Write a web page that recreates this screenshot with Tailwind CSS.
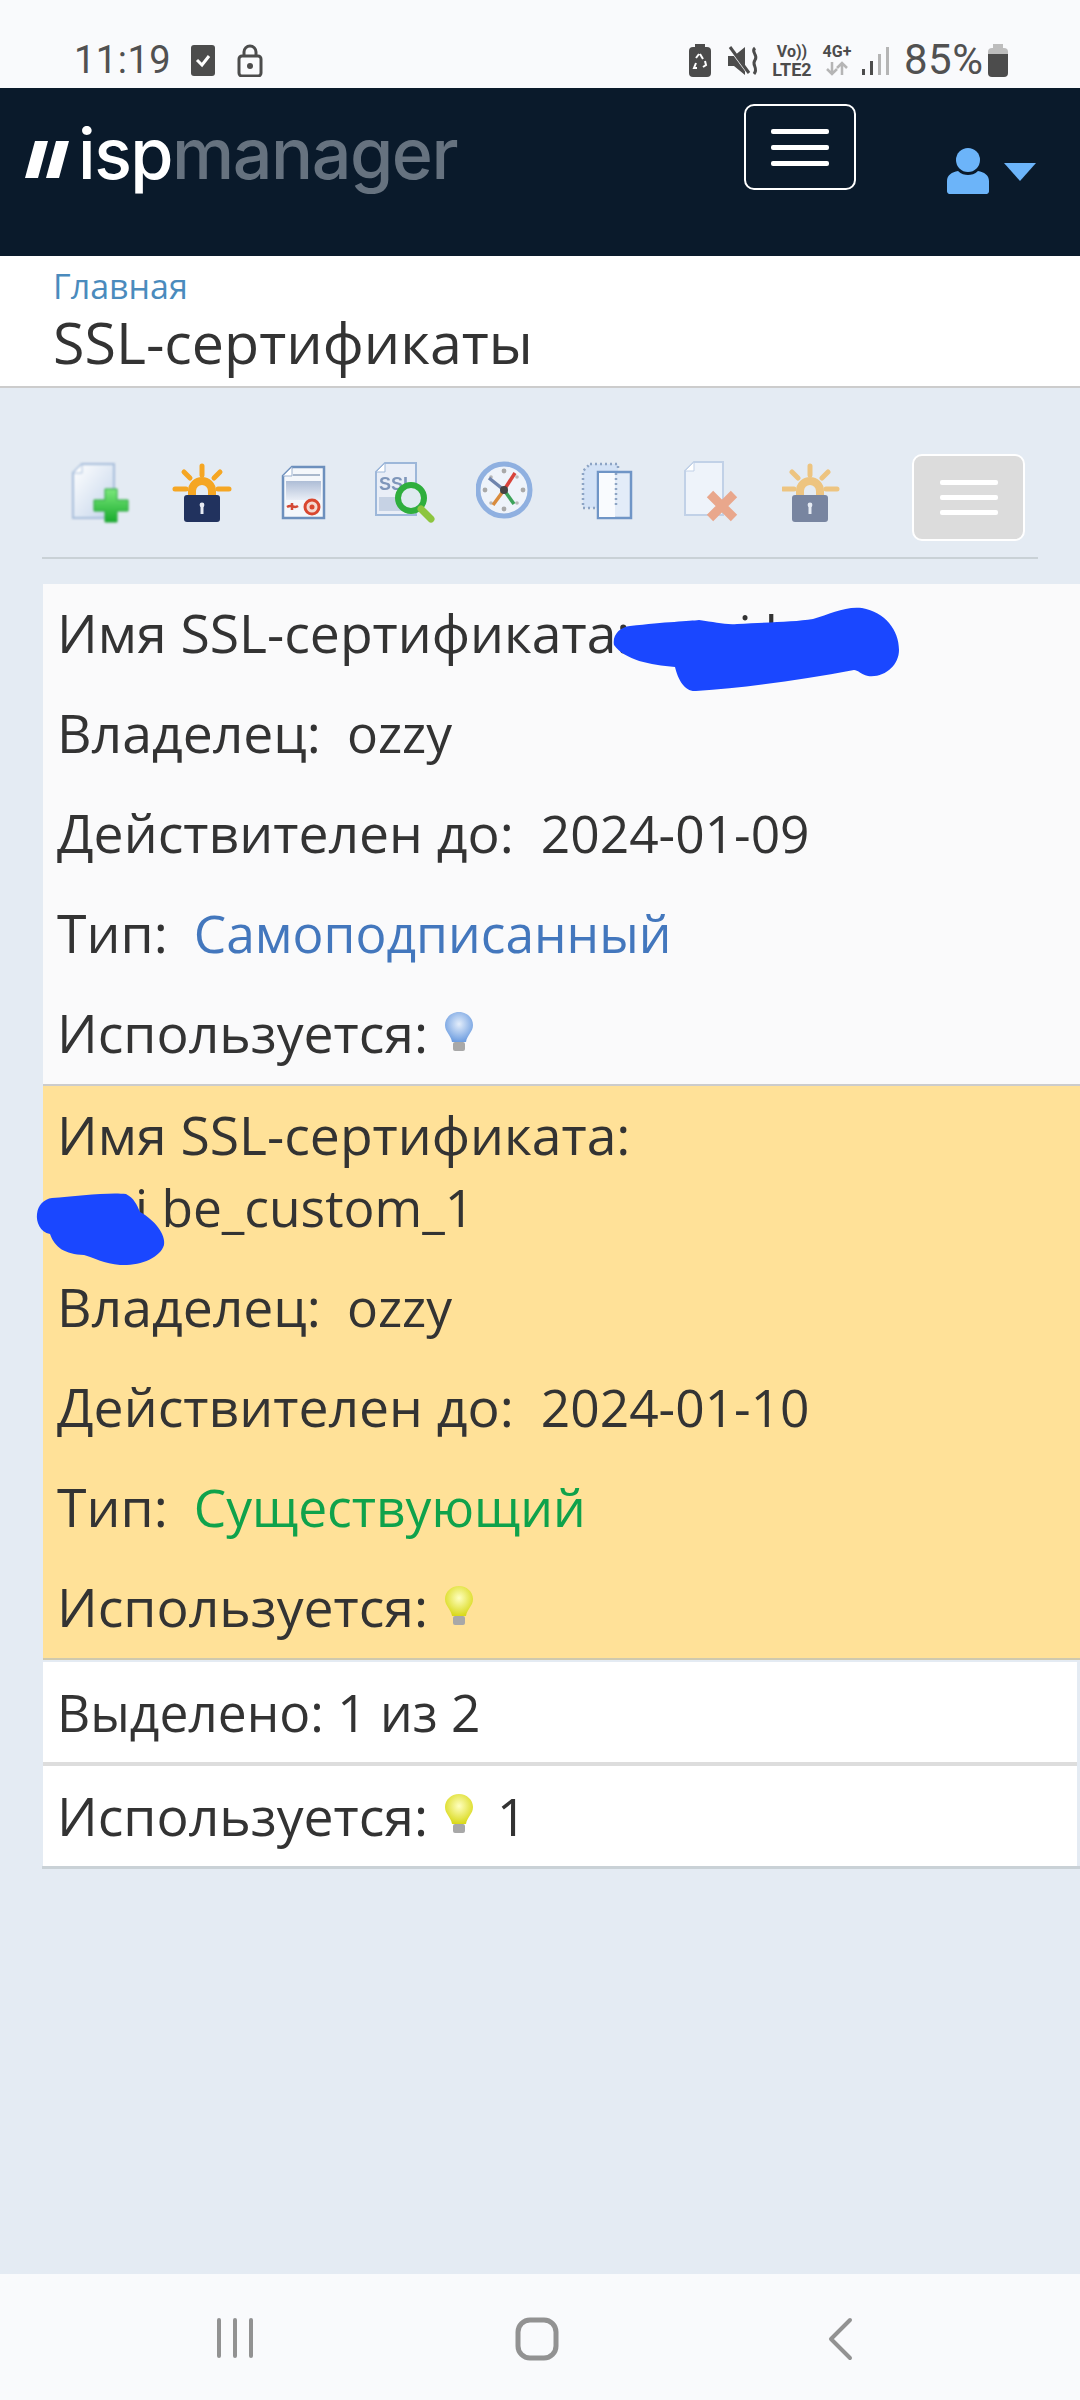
<!DOCTYPE html>
<html lang="ru">
<head>
  <meta charset="UTF-8" />
  <title>SSL-сертификаты</title>
  <script src="https://cdn.jsdelivr.net/npm/@tailwindcss/browser@4"></script>
</head>
<body class="bg-[#e4ebf3] font-['Open_Sans',sans-serif] text-[#333333]">
<div class="relative w-[1080px] h-[2400px] flex flex-col overflow-hidden">

  <!-- STATUS BAR -->
  <div class="h-[88px] bg-[#f9fafc] flex items-start pt-[44px] text-[#515151] font-['Roboto',sans-serif] shrink-0">
    <span class="ml-[74px] w-[96px] text-[38px] leading-[32px] tracking-[0.5px]">11:19</span>
    <svg class="ml-[20px]" width="26" height="33" viewBox="0 0 26 33"><rect x="1" y="1" width="24" height="31" rx="3" fill="#4c4c4c"/><path d="M7 16l5 5 7-9" fill="none" stroke="#fff" stroke-width="3"/></svg>
    <svg class="ml-[21px]" width="26" height="33" viewBox="0 0 26 33"><rect x="2" y="12" width="22" height="20" rx="3" fill="none" stroke="#4c4c4c" stroke-width="3"/><path d="M7 12V8a6 6 0 0 1 12 0v4" fill="none" stroke="#4c4c4c" stroke-width="3"/><circle cx="13" cy="22" r="3" fill="#4c4c4c"/></svg>
    <svg class="ml-[425px]" width="24" height="33" viewBox="0 0 24 33"><rect x="7" y="0" width="10" height="5" fill="#4c4c4c"/><rect x="1" y="3" width="22" height="30" rx="4" fill="#4c4c4c"/><path d="M12 10l3 5M17 17l1 4-3 2M9 24H6l2-5M8 14l3-4" fill="none" stroke="#fff" stroke-width="2"/></svg>
    <svg class="ml-[16px] mt-[2px]" width="32" height="30" viewBox="0 0 32 30"><path d="M0 10h6l11-9v28L6 20H0z" fill="#4c4c4c"/><path d="M1 1l20 27" stroke="#f9fafc" stroke-width="3"/><path d="M2 1l19 26" stroke="#4c4c4c" stroke-width="3"/><path d="M27 2c-5 4 4 7 0 12s4 8-1 14" fill="none" stroke="#4c4c4c" stroke-width="3"/></svg>
    <div class="ml-[9px] w-[46px] flex flex-col items-center font-bold text-[#4c4c4c] text-[16px] leading-[15px]">
      <span>Vo))</span>
      <span class="text-[18px] mt-[3px]">LTE2</span>
    </div>
    <div class="ml-[5px] w-[34px] flex flex-col items-center font-bold text-[#4c4c4c] text-[16px] leading-[15px]">
      <span>4G+</span>
      <svg class="mt-[2px]" width="24" height="15" viewBox="0 0 24 15"><path d="M7 1v12M2 8l5 5 5-5M17 14V2M12 7l5-5 5 5" fill="none" stroke="#b5b5b5" stroke-width="2.5"/></svg>
    </div>
    <svg class="ml-[7px] mt-[2px]" width="30" height="30" viewBox="0 0 30 30"><rect x="1" y="23" width="3" height="6" fill="#4c4c4c"/><rect x="9" y="15" width="3" height="14" fill="#4c4c4c"/><rect x="17" y="8" width="3" height="21" fill="#b5b5b5"/><rect x="25" y="1" width="3" height="28" fill="#b5b5b5"/></svg>
    <span class="ml-[13px] w-[83px] text-[42px] leading-[32px] tracking-[0.5px]">85%</span>
    <svg width="22" height="33" viewBox="0 0 22 33"><rect x="6" y="0" width="10" height="5" fill="#bdbdbd"/><path d="M1 8a4 4 0 0 1 4-4h12a4 4 0 0 1 4 4v2H1z" fill="#bdbdbd"/><path d="M1 10h20v19a4 4 0 0 1-4 4H5a4 4 0 0 1-4-4z" fill="#4c4c4c"/></svg>
  </div>

  <!-- HEADER -->
  <nav class="h-[168px] bg-[#0a1a2b] flex items-start shrink-0">
    <svg class="ml-[24px] mt-[52px]" width="46" height="39" viewBox="0 0 46 39"><path d="M11 1h13L14 38H1z" fill="#fff"/><path d="M32 1h13L35 38H22z" fill="#fff"/></svg>
    <div class="ml-[8px] mt-[26px] w-[380px] font-['Inter',sans-serif] text-[70px] leading-[80px] font-medium tracking-[-1.5px] text-[#66727f] whitespace-nowrap"><span class="text-white">isp</span>manager</div>
    <button class="ml-[286px] mt-[16px] w-[112px] h-[86px] border-2 border-white rounded-[10px] flex flex-col items-center justify-center gap-[11px]">
      <span class="block w-[58px] h-[5px] bg-white rounded-[2px]"></span>
      <span class="block w-[58px] h-[5px] bg-white rounded-[2px]"></span>
      <span class="block w-[58px] h-[5px] bg-white rounded-[2px]"></span>
    </button>
    <svg class="ml-[91px] mt-[60px]" width="42" height="46" viewBox="0 0 42 46"><ellipse cx="21" cy="12" rx="12" ry="12" fill="#6cb4f9"/><path d="M2 46a3 3 0 0 1-2-3V33c0-6 5-9 11-10 3 3 7 4 10 4s7-1 10-4c6 1 11 4 11 10v10a3 3 0 0 1-2 3z" fill="#6cb4f9"/></svg>
    <svg class="ml-[15px] mt-[75px]" width="32" height="18" viewBox="0 0 32 18"><path d="M0 0h32L16 18z" fill="#6cb4f9"/></svg>
  </nav>

  <!-- BREADCRUMB -->
  <header class="h-[132px] bg-white border-b-2 border-[#cccccc] pl-[53px] shrink-0">
    <a class="block pt-[5px] text-[#4a8bbd] text-[34px] leading-[50px]">Главная</a>
    <h1 class="text-[57.4px] leading-[62px] text-[#333333]">SSL-сертификаты</h1>
  </header>

  <!-- CONTENT -->
  <main class="flex-1 pt-[66px]">
    <div class="ml-[42px] mr-[42px] h-[105px] border-b-2 border-[#c9d1d6] flex items-start">
      <div class="flex pl-[7px] pt-[7px]">
        <!-- create -->
        <div class="w-[102px] flex justify-center blur-[0.8px]">
          <svg width="64" height="64" viewBox="0 0 64 64">
            <defs>
              <linearGradient id="doc" x1="0" y1="0" x2="1" y2="1"><stop offset="0" stop-color="#ffffff"/><stop offset="1" stop-color="#c3d4ea"/></linearGradient>
              <linearGradient id="plus" x1="0" y1="0" x2="0" y2="1"><stop offset="0" stop-color="#7ce87c"/><stop offset="1" stop-color="#17ab2c"/></linearGradient>
            </defs>
            <path d="M14 3h32v54H5V12z" fill="url(#doc)" stroke="#a8bedb" stroke-width="2"/>
            <path d="M14 3v9H5z" fill="#fff" stroke="#a8bedb"/>
            <path d="M37 28h12v11h11v11H49v11H37V50H26V39h11z" fill="url(#plus)" stroke="#27a53a"/>
          </svg>
        </div>
        <!-- letsencrypt -->
        <div class="w-[102px] flex justify-center blur-[0.7px]">
          <svg width="64" height="64" viewBox="0 0 64 64">
            <path d="M32 5v9M14 11l6 6M50 11l-6 6M5 28h11M48 28h11" stroke="#f5a623" stroke-width="5" stroke-linecap="round"/>
            <path d="M18 34v-4a14 14 0 0 1 28 0v4h-8v-4a6 6 0 0 0-12 0v4z" fill="#f5a623"/>
            <rect x="14" y="34" width="36" height="27" rx="3" fill="#21325e"/>
            <path d="M32 44v9" stroke="#e7ebf3" stroke-width="3"/><circle cx="32" cy="44" r="2.4" fill="#e7ebf3"/>
          </svg>
        </div>
        <!-- certificate request -->
        <div class="w-[102px] flex justify-center blur-[0.7px]">
          <svg width="64" height="64" viewBox="0 0 64 64">
            <defs><linearGradient id="blk" x1="0" y1="0" x2="0" y2="1"><stop offset="0" stop-color="#aebdd6"/><stop offset="1" stop-color="#e9eef6"/></linearGradient></defs>
            <path d="M20 6h32v51H11V15z" fill="#f4f7fb" stroke="#6d90bd" stroke-width="2.5"/>
            <path d="M20 6v9h-9z" fill="#fff" stroke="#9db3d0"/>
            <path d="M21 14h27" stroke="#a9b8cc" stroke-width="2"/>
            <rect x="14" y="20" width="35" height="19" fill="url(#blk)"/>
            <path d="M15 46c5-3 7 2 11-1M20 42v7" stroke="#d44a36" stroke-width="2.5" fill="none"/>
            <circle cx="40" cy="46" r="7" fill="#f4d8d0" stroke="#d9472f" stroke-width="3"/><circle cx="40" cy="46" r="2.5" fill="#d9472f"/>
          </svg>
        </div>
        <!-- ssl search -->
        <div class="w-[102px] flex justify-center blur-[0.7px]">
          <svg width="64" height="64" viewBox="0 0 64 64">
            <path d="M11 2h31v52H2V11z" fill="#e9eef7" stroke="#9db7d9" stroke-width="2"/>
            <path d="M11 2v9H2z" fill="#fff" stroke="#9db7d9"/>
            <text x="5" y="29" font-family="Liberation Sans" font-size="18" font-weight="700" fill="#7f96ba">SSL</text>
            <rect x="5" y="36" width="24" height="14" fill="#c6d2e4"/>
            <circle cx="37" cy="37" r="13" fill="#dfeaf0" stroke="#2fae3d" stroke-width="6"/>
            <path d="M47 48l10 10" stroke="#8cc53f" stroke-width="7" stroke-linecap="round"/>
          </svg>
        </div>
        <!-- compass -->
        <div class="w-[102px] flex justify-center blur-[0.7px]">
          <svg width="64" height="64" viewBox="0 0 64 64">
            <circle cx="28" cy="29" r="26" fill="#eef3fa" stroke="#8fb0e0" stroke-width="5"/>
            <circle cx="28" cy="10" r="2.4" fill="#a9a9a9"/><circle cx="28" cy="48" r="2.4" fill="#a9a9a9"/><circle cx="9" cy="29" r="2.4" fill="#a9a9a9"/><circle cx="47" cy="29" r="2.4" fill="#a9a9a9"/>
            <circle cx="15" cy="16" r="1.8" fill="#b8b8b8"/><circle cx="41" cy="42" r="1.8" fill="#b8b8b8"/><circle cx="15" cy="42" r="1.8" fill="#b8b8b8"/><circle cx="41" cy="16" r="1.8" fill="#b8b8b8"/>
            <path d="M28 29L39 12" stroke="#d8433b" stroke-width="3.5"/><path d="M28 29L38 43" stroke="#3da35a" stroke-width="3.5"/><path d="M28 29L17 44" stroke="#d98c3e" stroke-width="3.5"/><path d="M28 29L13 17" stroke="#6f84ad" stroke-width="3.5"/>
            <circle cx="28" cy="29" r="4" fill="#444"/>
          </svg>
        </div>
        <!-- copy -->
        <div class="w-[102px] flex justify-center blur-[0.7px]">
          <svg width="64" height="64" viewBox="0 0 64 64">
            <path d="M12 3h28v44H5V10z" fill="#d3e2f6" stroke="#8da4c4" stroke-width="2.5" stroke-dasharray="2 3"/>
            <rect x="20" y="11" width="33" height="46" fill="#e3ecf8" stroke="#6f95c6" stroke-width="2.5"/>
            <path d="M21 12h16v44H21z" fill="#f9fbfe"/>
            <path d="M38 12v34" stroke="#8da4c4" stroke-width="2.5" stroke-dasharray="2 3"/>
          </svg>
        </div>
        <!-- delete -->
        <div class="w-[102px] flex justify-center blur-[0.7px]">
          <svg width="64" height="64" viewBox="0 0 64 64">
            <path d="M14 1h29v53H5V10z" fill="#eef3fa" stroke="#c1d1e7" stroke-width="2"/>
            <path d="M14 1v9H5z" fill="#fff" stroke="#c1d1e7"/>
            <path d="M30 33l24 24M54 33L30 57" stroke="#e9a78c" stroke-width="9"/>
          </svg>
        </div>
        <!-- letsencrypt disabled -->
        <div class="w-[102px] flex justify-center blur-[0.7px] opacity-55">
          <svg width="64" height="64" viewBox="0 0 64 64">
            <path d="M28 5v9M10 11l6 6M46 11l-6 6M1 28h11M44 28h11" stroke="#f5a623" stroke-width="5" stroke-linecap="round"/>
            <path d="M14 34v-4a14 14 0 0 1 28 0v4h-8v-4a6 6 0 0 0-12 0v4z" fill="#f5a623"/>
            <rect x="10" y="34" width="36" height="27" rx="3" fill="#21325e"/>
            <path d="M28 44v9" stroke="#e7ebf3" stroke-width="3"/><circle cx="28" cy="44" r="2.4" fill="#e7ebf3"/>
          </svg>
        </div>
      </div>
      <button class="ml-[47px] w-[113px] h-[87px] bg-[#dcdcdc] border-2 border-white rounded-[10px] flex flex-col items-center justify-center gap-[10px]">
        <span class="block w-[58px] h-[5px] bg-white rounded-[2px]"></span>
        <span class="block w-[58px] h-[5px] bg-white rounded-[2px]"></span>
        <span class="block w-[58px] h-[5px] bg-white rounded-[2px]"></span>
      </button>
    </div>

    <div class="mt-[25px] ml-[43px] text-[51.5px] leading-[72px]">
      <!-- row 1 -->
      <section class="bg-[#fafafb] border-b-2 border-[#cccccc] pt-[13px] pb-[15px] pl-[14px] flex flex-col gap-[28px]">
        <div class="whitespace-nowrap"><span class="font-medium text-[53.5px]">Имя SSL-сертификата:</span><span class="inline-block ml-[108px]">i be</span></div>
        <div><span class="font-medium text-[53.5px]">Владелец:</span><span class="ml-[26px]">ozzy</span></div>
        <div><span class="font-medium text-[53.5px]">Действителен до:</span><span class="ml-[27px]">2024-01-09</span></div>
        <div><span class="font-medium text-[53.5px]">Тип:</span><span class="ml-[26px] text-[#4377bd]">Самоподписанный</span></div>
        <div class="flex items-center"><span class="font-medium text-[53.5px]">Используется:</span>
          <svg class="ml-[14px] -mt-[2px]" width="34" height="44" viewBox="0 0 34 44">
            <defs><radialGradient id="bb" cx="0.5" cy="0.4" r="0.6"><stop offset="0" stop-color="#e4eefb"/><stop offset="1" stop-color="#6d9de0"/></radialGradient></defs>
            <path d="M17 2c8 0 14 6 14 13 0 7-6 10-7 17H10C9 25 3 22 3 15 3 8 9 2 17 2z" fill="url(#bb)"/>
            <rect x="11" y="32" width="12" height="9" rx="2" fill="#a8a8a8"/>
          </svg>
        </div>
      </section>
      <!-- row 2 -->
      <section class="bg-[#ffe198] border-b-2 border-[#cfc9ae] pt-[13px] pb-[15px] pl-[14px] flex flex-col gap-[28px]">
        <div><span class="font-medium text-[53.5px]">Имя SSL-сертификата:</span><br><span class="inline-block pl-[78px]">i be_custom_1</span></div>
        <div><span class="font-medium text-[53.5px]">Владелец:</span><span class="ml-[26px]">ozzy</span></div>
        <div><span class="font-medium text-[53.5px]">Действителен до:</span><span class="ml-[27px]">2024-01-10</span></div>
        <div><span class="font-medium text-[53.5px]">Тип:</span><span class="ml-[26px] text-[#0fa24b]">Существующий</span></div>
        <div class="flex items-center"><span class="font-medium text-[53.5px]">Используется:</span>
          <svg class="ml-[14px] -mt-[2px]" width="34" height="44" viewBox="0 0 34 44">
            <defs><radialGradient id="yb" cx="0.5" cy="0.4" r="0.6"><stop offset="0" stop-color="#ffffc0"/><stop offset="1" stop-color="#d9d91a"/></radialGradient></defs>
            <path d="M17 2c8 0 14 6 14 13 0 7-6 10-7 17H10C9 25 3 22 3 15 3 8 9 2 17 2z" fill="url(#yb)"/>
            <rect x="11" y="32" width="12" height="9" rx="2" fill="#a8a8a8"/>
          </svg>
        </div>
      </section>
      <!-- summary -->
      <div class="mt-[2px] mr-[3px] h-[104px] bg-white border-b-4 border-[#dddddd] pl-[14px] pt-[14px]">Выделено: 1 из 2</div>
      <div class="-ml-[1px] h-[103px] border-b-[3px] border-[#c9d1d6]">
        <div class="ml-[1px] mr-[3px] h-full bg-white pl-[14px] pt-[14px] flex items-start">
          <span class="font-medium text-[53.5px]">Используется:</span>
          <svg class="ml-[14px] mt-[12px]" width="34" height="44" viewBox="0 0 34 44">
            <defs><radialGradient id="yb2" cx="0.5" cy="0.4" r="0.6"><stop offset="0" stop-color="#ffffc0"/><stop offset="1" stop-color="#d9d91a"/></radialGradient></defs>
            <path d="M17 2c8 0 14 6 14 13 0 7-6 10-7 17H10C9 25 3 22 3 15 3 8 9 2 17 2z" fill="url(#yb2)"/>
            <rect x="11" y="32" width="12" height="9" rx="2" fill="#a8a8a8"/>
          </svg>
          <span class="ml-[21px]">1</span>
        </div>
      </div>
    </div>
  </main>

  <!-- ANDROID NAV -->
  <div class="h-[126px] bg-[#f9fafc] relative shrink-0 flex items-start pt-[43px]">
    <svg class="ml-[216px]" width="38" height="42" viewBox="0 0 38 42"><path d="M3 3v36M19 3v36M35 3v36" stroke="#929292" stroke-width="4" stroke-linecap="round"/></svg>
    <svg class="ml-[261px]" width="44" height="44" viewBox="0 0 44 44"><rect x="3" y="3" width="38" height="38" rx="12" fill="none" stroke="#929292" stroke-width="5"/></svg>
    <svg class="ml-[268px]" width="28" height="44" viewBox="0 0 28 44"><path d="M23 3L4 22l19 19" fill="none" stroke="#929292" stroke-width="4" stroke-linecap="round" stroke-linejoin="round"/></svg>
  </div>

  <!-- redaction scribbles drawn over the screenshot -->
  <svg class="absolute left-0 top-0 pointer-events-none" width="1080" height="1300" viewBox="0 0 1080 1300">
    <path d="M630 626C665 622 690 621 699 620C715 622 725 625 737 624C770 622 795 622 813 619C830 614 845 606 862 608C885 612 899 630 899 650C899 665 885 678 868 676C860 674 858 670 854 670C800 680 745 688 696 691C685 692 678 680 675 667C650 665 625 660 614 645C612 635 620 627 630 626Z" fill="#1a47ff"/>
    <path d="M52 1198C75 1196 110 1192 126 1194C134 1198 137 1205 140 1212C155 1220 166 1235 164 1245C160 1258 140 1266 120 1265C105 1264 92 1257 84 1255C65 1254 55 1248 50 1234C40 1232 36 1222 37 1214C38 1205 44 1199 52 1198Z" fill="#1a47ff"/>
  </svg>
</div>
</body>
</html>
